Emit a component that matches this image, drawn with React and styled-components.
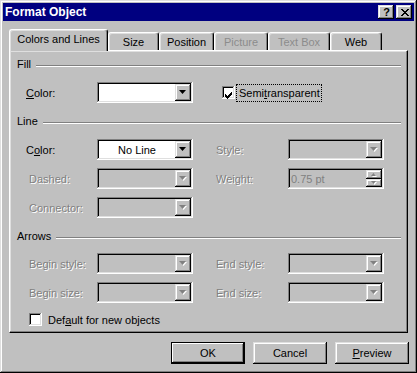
import React from "react";
import styled, { createGlobalStyle, css } from "styled-components";

const GlobalStyle = createGlobalStyle`
  html, body {
    margin: 0;
    padding: 0;
    background: #c0c0c0;
  }
  body {
    font-family: "Liberation Sans", Arial, sans-serif;
    font-size: 11px;
    color: #000;
  }
`;

const raised = css`
  box-shadow: inset -1px -1px #000, inset 1px 1px #dfdfdf,
    inset -2px -2px #808080, inset 2px 2px #fff;
`;

const sunken = css`
  box-shadow: inset -1px -1px #fff, inset 1px 1px #808080,
    inset -2px -2px #dfdfdf, inset 2px 2px #000;
`;

const disabledText = css`
  color: #808080;
  text-shadow: 1px 1px 0 #fff;
`;

const Window = styled.div`
  box-sizing: border-box;
  width: 417px;
  height: 373px;
  padding: 3px;
  background: #c0c0c0;
  ${raised};
  display: flex;
  flex-direction: column;
`;

const TitleBar = styled.div`
  height: 18px;
  background: #000080;
  color: #fff;
  display: flex;
  align-items: center;
  padding: 0 2px;
  font-weight: bold;
  font-size: 12px;
`;

const Title = styled.div`
  flex: 1;
`;

const TitleButtons = styled.div`
  display: flex;
  gap: 2px;
`;

const TitleButton = styled.div`
  box-sizing: border-box;
  width: 16px;
  height: 14px;
  background: #c0c0c0;
  ${raised};
  display: flex;
  align-items: center;
  justify-content: center;
  color: #000;
  font-size: 11px;
  font-weight: bold;
  line-height: 1;
  padding-left: 1px;
`;

const Body = styled.div`
  padding: 8px 6px 0 6px;
`;

const TabStrip = styled.div`
  display: flex;
  align-items: flex-end;
  height: 21px;
`;

const Tab = styled.div`
  box-sizing: border-box;
  width: ${(p) => p.$w}px;
  height: ${(p) => (p.$active ? 22 : 18)}px;
  margin-bottom: ${(p) => (p.$active ? -1 : 0)}px;
  position: relative;
  z-index: ${(p) => (p.$active ? 2 : 0)};
  background: #c0c0c0;
  border-top: 1px solid #fff;
  border-left: 1px solid #fff;
  border-right: 1px solid #000;
  border-radius: 3px 3px 0 0;
  box-shadow: inset -1px 0 #808080, inset 1px 1px #dfdfdf;
  display: flex;
  align-items: center;
  justify-content: center;
  padding-bottom: ${(p) => (p.$active ? 3 : 0)}px;
  ${(p) => p.$disabled && "color: #8c8c8c;"}
`;

const Panel = styled.div`
  box-sizing: border-box;
  height: 283px;
  border: 1px solid;
  border-color: #fff #000 #000 #fff;
  box-shadow: inset -1px -1px #808080, inset 1px 1px #dfdfdf;
  padding: 7px 6px 0 7px;
`;

const GroupHeader = styled.div`
  display: flex;
  align-items: center;
  gap: 5px;
  height: 13px;
  line-height: 13px;
  margin-top: ${(p) => p.$top || 0}px;

  &::after {
    content: "";
    flex: 1;
    height: 0;
    border-top: 1px solid #808080;
    border-bottom: 1px solid #fff;
    margin-top: 2px;
  }
`;

const Row = styled.div`
  display: flex;
  align-items: center;
  height: 21px;
  padding-left: 9px;
  margin-top: ${(p) => p.$top || 0}px;
`;

const Label = styled.div`
  box-sizing: border-box;
  width: ${(p) => p.$w || 71}px;
  margin-left: ${(p) => p.$gap || 0}px;
  padding-left: ${(p) => (p.$disabled && !p.$gap ? 3 : 0)}px;
  ${(p) => p.$disabled && disabledText};
`;

const Key = styled.span`
  text-decoration: underline;
`;

const Combo = styled.div`
  box-sizing: border-box;
  width: 96px;
  height: 21px;
  padding: 2px;
  display: flex;
  background: ${(p) => (p.$disabled ? "#c0c0c0" : "#fff")};
  ${sunken};
`;

const ComboValue = styled.div`
  flex: 1;
  display: flex;
  align-items: center;
  justify-content: ${(p) => (p.$left ? "flex-start" : "center")};
  padding-left: ${(p) => (p.$left ? 1 : 0)}px;
  ${(p) => p.$disabled && "color: #808080;"}
`;

const ArrowButton = styled.div`
  box-sizing: border-box;
  width: 16px;
  height: ${(p) => p.$h || 17}px;
  background: #c0c0c0;
  ${raised};
  display: flex;
  align-items: center;
  justify-content: center;
`;

const SpinButtons = styled.div`
  display: flex;
  flex-direction: column;
`;

const CheckField = styled.div`
  display: flex;
  align-items: center;
  margin-left: ${(p) => p.$gap || 0}px;
`;

const CheckBox = styled.div`
  box-sizing: border-box;
  width: 13px;
  height: 13px;
  padding: 3px 0 0 3px;
  background: #fff;
  ${sunken};
`;

const CheckText = styled.span`
  margin-left: ${(p) => (p.$focus ? 1 : 3)}px;
  padding: 1px 1px 1px 2px;
  line-height: 14px;
  border: 1px dotted ${(p) => (p.$focus ? "#000" : "transparent")};
`;

const CheckRow = styled.div`
  display: flex;
  align-items: center;
  height: 13px;
  padding-left: 12px;
  margin-top: ${(p) => p.$top || 0}px;
`;

const Footer = styled.div`
  display: flex;
  justify-content: flex-end;
  gap: 8px;
  padding-right: 5px;
  margin-top: 9px;
`;

const Button = styled.div`
  box-sizing: border-box;
  width: 74px;
  height: 22px;
  display: flex;
  align-items: center;
  justify-content: center;
  background: #c0c0c0;
  ${(p) =>
    p.$default
      ? css`
          border: 1px solid #000;
          box-shadow: inset -1px -1px #000, inset 1px 1px #fff,
            inset -2px -2px #808080;
        `
      : raised};
`;

function Triangle({ dir = "down", size = 7, disabled }) {
  const h = Math.ceil(size / 2);
  const pts =
    dir === "down"
      ? `0,0 ${size},0 ${size / 2},${h}`
      : `0,${h} ${size},${h} ${size / 2},0`;
  return (
    <svg width={size + 1} height={h + 1} viewBox={`0 0 ${size + 1} ${h + 1}`}>
      {disabled && (
        <polygon points={pts} fill="#fff" transform="translate(1,1)" />
      )}
      <polygon points={pts} fill={disabled ? "#808080" : "#000"} />
    </svg>
  );
}

function CloseGlyph() {
  return (
    <svg width="8" height="7" viewBox="0 0 8 7" shapeRendering="crispEdges">
      <path
        fill="#000"
        d="M0 0h2v1H0z M6 0h2v1H6z M1 1h2v1H1z M5 1h2v1H5z M2 2h4v1H2z M3 3h2v1H3z M2 4h4v1H2z M1 5h2v1H1z M5 5h2v1H5z M0 6h2v1H0z M6 6h2v1H6z"
      />
    </svg>
  );
}

function CheckMark() {
  return (
    <svg width="7" height="7" viewBox="0 0 7 7" shapeRendering="crispEdges">
      <path
        fill="#000"
        d="M0 2h1v3H0z M1 3h1v3H1z M2 4h1v3H2z M3 3h1v3H3z M4 2h1v3H4z M5 1h1v3H5z M6 0h1v3H6z"
      />
    </svg>
  );
}

function Dropdown({ value, disabled }) {
  return (
    <Combo $disabled={disabled}>
      <ComboValue>{value}</ComboValue>
      <ArrowButton>
        <Triangle disabled={disabled} />
      </ArrowButton>
    </Combo>
  );
}

function Spinner({ value }) {
  return (
    <Combo $disabled>
      <ComboValue $left $disabled>
        {value}
      </ComboValue>
      <SpinButtons>
        <ArrowButton $h={9}>
          <Triangle dir="up" size={5} disabled />
        </ArrowButton>
        <ArrowButton $h={8}>
          <Triangle size={5} disabled />
        </ArrowButton>
      </SpinButtons>
    </Combo>
  );
}

function Check({ checked, focus, children, gap }) {
  return (
    <CheckField $gap={gap}>
      <CheckBox>{checked && <CheckMark />}</CheckBox>
      <CheckText $focus={focus}>{children}</CheckText>
    </CheckField>
  );
}

const tabs = [
  { name: "Colors and Lines", w: 99, active: true },
  { name: "Size", w: 51 },
  { name: "Position", w: 55 },
  { name: "Picture", w: 54, disabled: true },
  { name: "Text Box", w: 62, disabled: true },
  { name: "Web", w: 52 },
];

export default function App() {
  return (
    <>
      <GlobalStyle />
      <Window>
        <TitleBar>
          <Title>Format Object</Title>
          <TitleButtons>
            <TitleButton>?</TitleButton>
            <TitleButton>
              <CloseGlyph />
            </TitleButton>
          </TitleButtons>
        </TitleBar>

        <Body>
          <TabStrip>
            {tabs.map((t) => (
              <Tab key={t.name} $w={t.w} $active={t.active} $disabled={t.disabled}>
                {t.name}
              </Tab>
            ))}
          </TabStrip>

          <Panel>
            <GroupHeader>Fill</GroupHeader>
            <Row $top={11}>
              <Label>
                <Key>C</Key>olor:
              </Label>
              <Dropdown value="" />
              <Check checked focus gap={29}>
                Semi<Key>t</Key>ransparent
              </Check>
            </Row>

            <GroupHeader $top={12}>Line</GroupHeader>
            <Row $top={11}>
              <Label>
                C<Key>o</Key>lor:
              </Label>
              <Dropdown value="No Line" />
              <Label $disabled $gap={23} $w={72}>
                Style:
              </Label>
              <Dropdown disabled />
            </Row>
            <Row $top={8}>
              <Label $disabled>Dashed:</Label>
              <Dropdown disabled />
              <Label $disabled $gap={23} $w={72}>
                Weight:
              </Label>
              <Spinner value="0.75 pt" />
            </Row>
            <Row $top={8}>
              <Label $disabled>Connector:</Label>
              <Dropdown disabled />
            </Row>

            <GroupHeader $top={12}>Arrows</GroupHeader>
            <Row $top={10}>
              <Label $disabled>Begin style:</Label>
              <Dropdown disabled />
              <Label $disabled $gap={23} $w={72}>
                End style:
              </Label>
              <Dropdown disabled />
            </Row>
            <Row $top={8}>
              <Label $disabled>Begin size:</Label>
              <Dropdown disabled />
              <Label $disabled $gap={23} $w={72}>
                End size:
              </Label>
              <Dropdown disabled />
            </Row>

            <CheckRow $top={10}>
              <Check>
                Def<Key>a</Key>ult for new objects
              </Check>
            </CheckRow>
          </Panel>
        </Body>

        <Footer>
          <Button $default>OK</Button>
          <Button>Cancel</Button>
          <Button>
            <Key>P</Key>review
          </Button>
        </Footer>
      </Window>
    </>
  );
}
